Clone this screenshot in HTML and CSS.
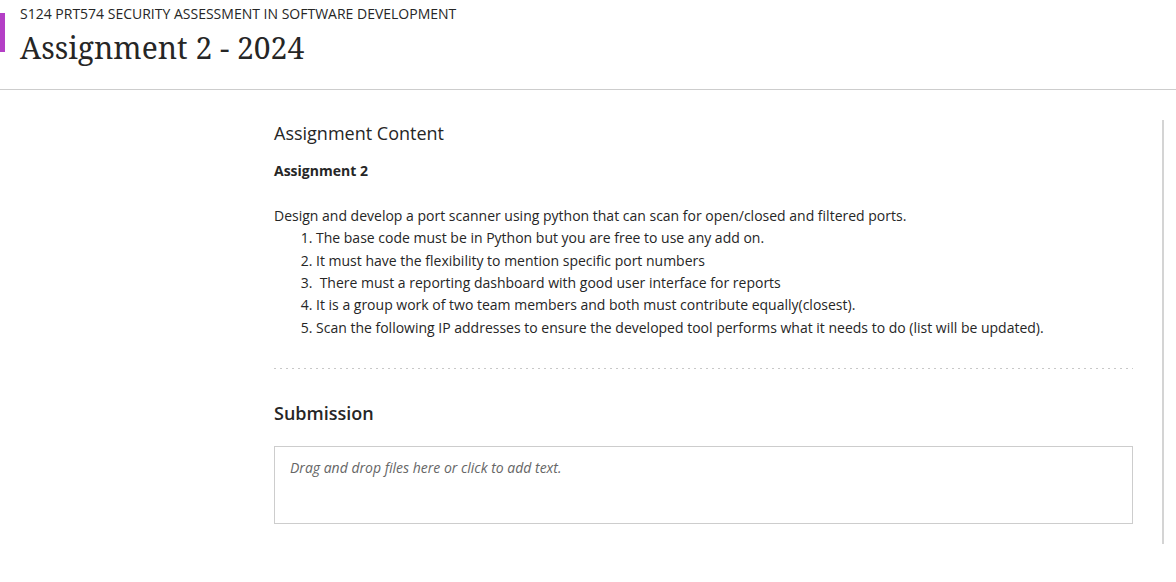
FILE: index.html
```html
<!DOCTYPE html>
<html>
<head>
<meta charset="utf-8">
<link rel="stylesheet" href="styles.css">
</head>
<body>
<header class="page-header">
  <div class="accent"></div>
  <div class="titles">
    <div class="course">S124 PRT574 SECURITY ASSESSMENT IN SOFTWARE DEVELOPMENT</div>
    <h1 class="title">Assignment 2 - 2024</h1>
  </div>
</header>
<div class="body">
  <main class="content">
    <h2 class="section-title">Assignment Content</h2>
    <div class="text">
      <p class="bold">Assignment 2</p>
      <p class="blank">&nbsp;</p>
      <p>Design and develop a port scanner using python that can scan for open/closed and filtered ports.</p>
      <ol class="tasks">
        <li>The base code must be in Python but you are free to use any add on.</li>
        <li>It must have the flexibility to mention specific port numbers</li>
        <li>&nbsp;There must a reporting dashboard with good user interface for reports</li>
        <li>It is a group work of two team members and both must contribute equally(closest).</li>
        <li>Scan the following IP addresses to ensure the developed tool performs what it needs to do (list will be updated).</li>
      </ol>
    </div>
    <div class="dots"></div>
    <h2 class="sub-title">Submission</h2>
    <div class="dropzone">Drag and drop files here or click to add text.</div>
  </main>
  <div class="rail"></div>
</div>
</body>
</html>
```
FILE: styles.css
```css
html, body {
  margin: 0;
  padding: 0;
  background: #ffffff;
  font-family: "Open Sans", "Noto Sans", sans-serif;
  color: #262626;
}
.page-header {
  display: flex;
  align-items: flex-start;
  height: 89px;
  border-bottom: 1px solid #cdcdcd;
  box-sizing: content-box;
}
.accent {
  width: 5px;
  height: 39px;
  margin-top: 13px;
  background: #b43fc6;
  flex: none;
}
.titles {
  padding-left: 15px;
  padding-top: 5px;
}
.course {
  font-size: 14px;
  line-height: 18px;
  color: #262626;
}
.title {
  margin: 4px 0 0;
  font-family: "Noto Serif", "DejaVu Serif", serif;
  font-weight: 400;
  font-size: 30px;
  line-height: 42px;
  color: #262626;
}
.body {
  display: flex;
  padding-top: 30px;
}
.content {
  margin-left: 274px;
  width: 859px;
  flex: none;
}
.rail {
  margin-left: 29px;
  width: 2px;
  height: 424px;
  background: #d4d4d4;
}
.section-title {
  margin: 0;
  font-size: 18px;
  font-weight: 400;
  line-height: 26px;
  color: #262626;
}
.text {
  margin-top: 14px;
  font-size: 14px;
  line-height: 22.4px;
}
.text p {
  margin: 0;
}
.bold {
  font-weight: 700;
}
.tasks {
  margin: 0;
  padding-left: 42px;
}
.dots {
  margin-top: 29px;
  height: 1px;
  background: repeating-linear-gradient(to right, #c8c8c8 0, #c8c8c8 2px, transparent 2px, transparent 6px);
}
.sub-title {
  margin: 32px 0 0;
  font-size: 18px;
  font-weight: 600;
  line-height: 24px;
  color: #262626;
}
.dropzone {
  margin-top: 21px;
  height: 78px;
  border: 1px solid #cdcdcd;
  padding: 11px 15px 0;
  font-size: 14px;
  font-style: italic;
  line-height: 20px;
  color: #666666;
  box-sizing: border-box;
}
```
